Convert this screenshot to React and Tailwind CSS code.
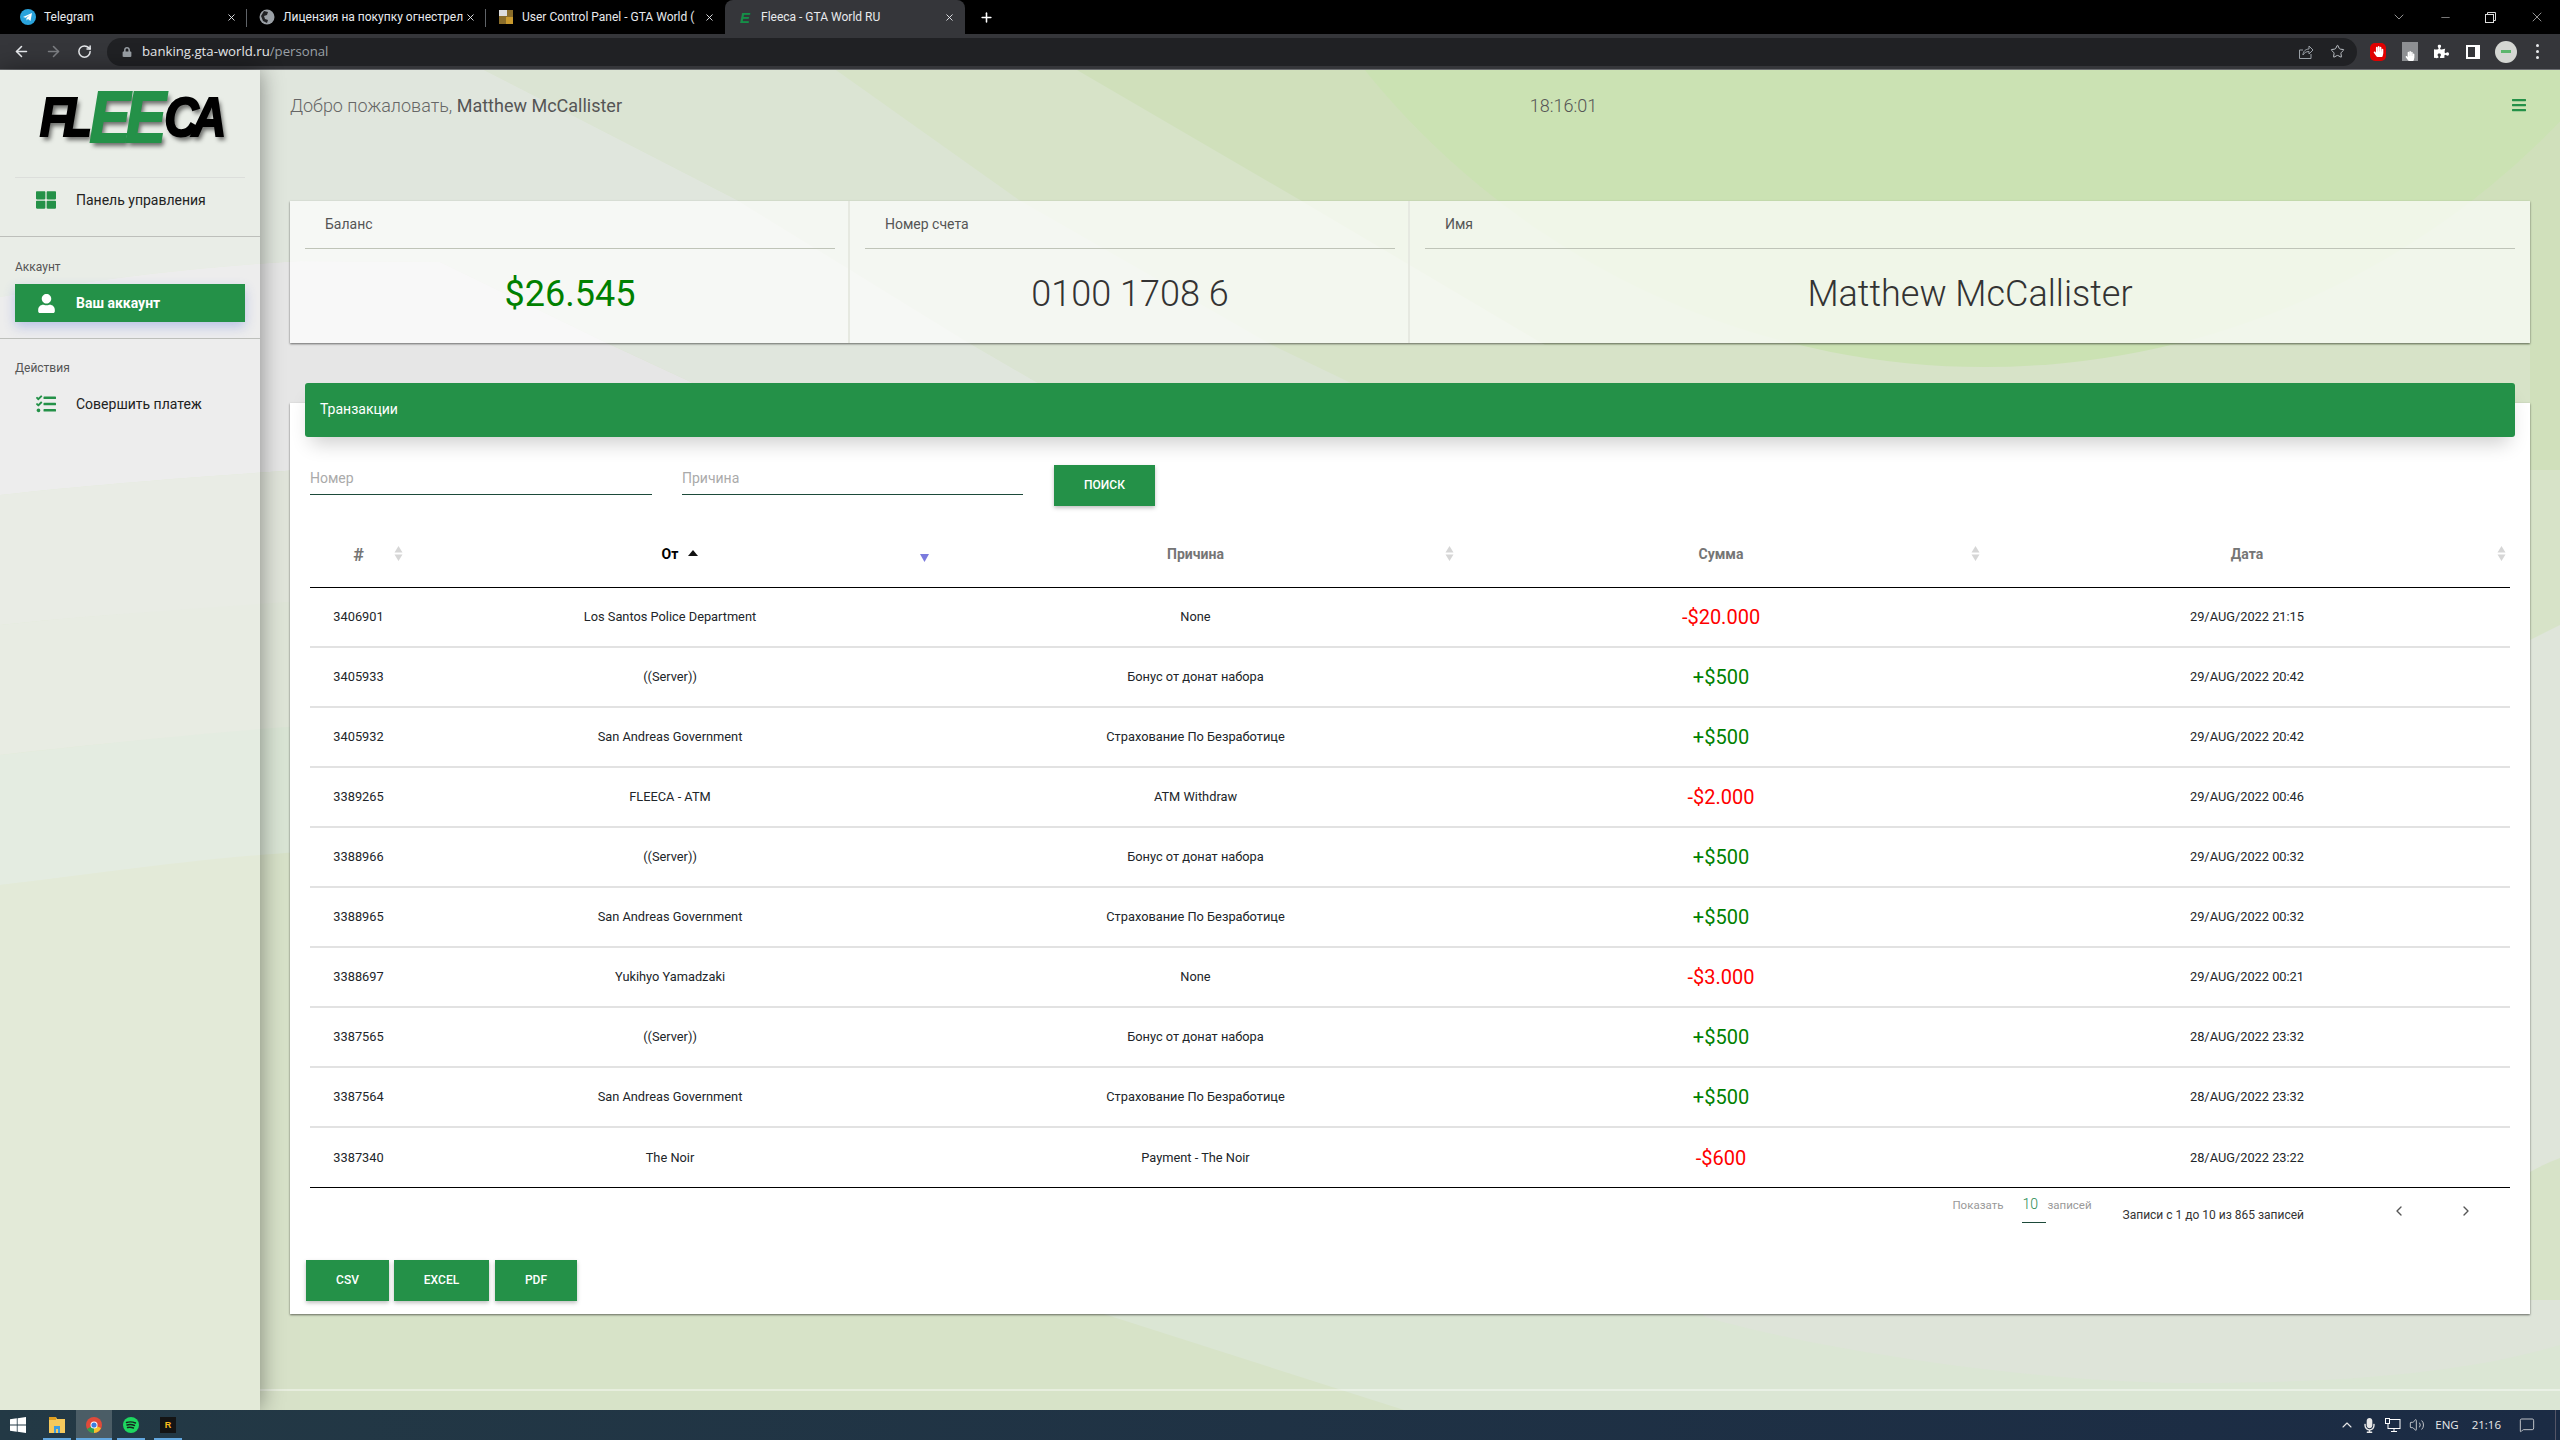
import React from 'react';
import { ArrowLeft, ArrowRight, RotateCw, Star, Plus, X, ChevronLeft, ChevronRight, ChevronDown, ChevronUp, Minus, Volume2, MessageSquare } from 'lucide-react';
import { FaThLarge, FaUser, FaTasks, FaLock, FaPuzzlePiece, FaBars, FaHandPaper, FaMicrophone } from 'react-icons/fa';

const rows = [
  ['3406901', 'Los Santos Police Department', 'None', '-$20.000', '29/AUG/2022 21:15'],
  ['3405933', '((Server))', 'Бонус от донат набора', '+$500', '29/AUG/2022 20:42'],
  ['3405932', 'San Andreas Government', 'Страхование По Безработице', '+$500', '29/AUG/2022 20:42'],
  ['3389265', 'FLEECA - ATM', 'ATM Withdraw', '-$2.000', '29/AUG/2022 00:46'],
  ['3388966', '((Server))', 'Бонус от донат набора', '+$500', '29/AUG/2022 00:32'],
  ['3388965', 'San Andreas Government', 'Страхование По Безработице', '+$500', '29/AUG/2022 00:32'],
  ['3388697', 'Yukihyo Yamadzaki', 'None', '-$3.000', '29/AUG/2022 00:21'],
  ['3387565', '((Server))', 'Бонус от донат набора', '+$500', '28/AUG/2022 23:32'],
  ['3387564', 'San Andreas Government', 'Страхование По Безработице', '+$500', '28/AUG/2022 23:32'],
  ['3387340', 'The Noir', 'Payment - The Noir', '-$600', '28/AUG/2022 23:22'],
];

function Sort() {
  return (
    <svg className="absolute right-[4px] top-[40px]" width="9" height="15" viewBox="0 0 9 15">
      <path d="M4.5 0 L8.5 6.5 H0.5 Z M4.5 15 L8.5 8.5 H0.5 Z" fill="#d6d6d6" />
    </svg>
  );
}

function Tab({ icon, title, active, width, sep, first }) {
  return (
    <div className={`relative h-[34px] flex items-center ${width} ${first ? 'ml-[8px]' : ''} ${active ? 'bg-[#35363a] rounded-t-[8px]' : ''}`}>
      <div className="w-[16px] h-[16px] ml-[12px] mr-[8px] flex items-center justify-center shrink-0">{icon}</div>
      <div className="flex-1 min-w-0 whitespace-nowrap text-[12px] text-[#e8eaed] [font-family:Roboto,sans-serif]">{title}</div>
      <X size={11} strokeWidth={2} className="text-[#e8eaed] mx-[10px] shrink-0" />
      {sep && <div className="absolute right-0 top-[9px] h-[18px] w-px bg-[#5f6368]" />}
    </div>
  );
}

function Card({ title, value, color, span }) {
  return (
    <div className={`h-[142px] pl-[15px] pr-[13px] bg-white/70 border-r-2 border-[#e6e9e1] last:border-r-0 last:pr-[15px] ${span ? 'col-span-2' : ''}`}>
      <div className="h-[48px] border-b border-[#bfc4b8] pl-[20px] pt-[14px] text-[14px] leading-[18px] text-[#555]">{title}</div>
      <div className={`h-[94px] pb-[4px] flex items-center justify-center text-[36px] ${color}`}>{value}</div>
    </div>
  );
}

function Btn({ children, w }) {
  return (
    <button className={`h-[41px] pb-[1px] ${w} bg-[#249148] text-white text-[12px] font-medium uppercase shadow-[0_2px_4px_rgba(0,0,0,0.25)]`}>{children}</button>
  );
}

function Background() {
  return (
    <svg className="absolute inset-0 w-full h-full" viewBox="0 70 2560 1340" preserveAspectRatio="none">
      <rect x="0" y="70" width="2560" height="1340" fill="#d7e3c8" />
      <path d="M1077 70 H2560 V470 H2530 V345 H1545 L1300 200 Z" fill="#d0e0bb" />
      <circle cx="1985" cy="-429" r="796" fill="#cbe2b3" />
      <path d="M484 70 H836 L1019 200 L1272 345 L1351 383 H1038 L969 343 L737 200 Z" fill="#dbe4d3" />
      <path d="M0 70 H484 L737 200 L969 343 L1038 383 H693 L607 343 L440 262 L300 261 C180 268 90 280 0 297 Z" fill="#e0e6dd" />
      <path d="M0 297 C90 280 180 268 300 261 L440 262 L607 343 L693 383 L700 520 H300 V470 C180 478 90 485 0 495 Z" fill="#e6e6e6" />
      <path d="M0 495 C90 485 180 478 300 470 V605 C180 610 90 615 0 625 Z" fill="#e0e4da" />
      <path d="M0 625 C90 615 180 610 300 601 V730 C180 735 90 745 0 755 Z" fill="#dee4d7" />
      <path d="M0 755 C90 745 180 735 300 726 V855 C180 860 90 875 0 885 Z" fill="#d9e4d4" />
      <path d="M0 885 C90 875 180 860 300 852 V1410 H0 Z" fill="#d7e1c8" />
      <path d="M2530 640 C2540 635 2550 630 2560 625 V1158 C2550 1162 2540 1166 2530 1172 Z" fill="#dfe5da" />
      <path d="M1060 1300 H2560 V1410 H1404 Z" fill="#dbe6d4" />
      <path d="M1690 1300 L1705 1317 C1800 1345 2020 1383 2196 1383 C2350 1383 2470 1372 2560 1345 V1300 Z" fill="#dee4d9" />
    </svg>
  );
}

function Logo() {
  const base = "[font-family:'Liberation_Sans',sans-serif] font-bold italic leading-none [text-shadow:3px_4px_5px_rgba(0,0,0,0.55)]";
  return (
    <div className="h-[107px] flex items-center justify-center pb-[14px] select-none">
      <div className={`flex items-center scale-x-[0.85] ${base}`}>
        <span className="text-[56px] text-black tracking-[-7px] [-webkit-text-stroke:2px_#000]">FL</span>
        <span className="text-[72px] text-[#249148] tracking-[-6px] ml-[4px] [-webkit-text-stroke:2px_#249148]">EE</span>
        <span className="text-[56px] text-black tracking-[-8px] ml-[4px] [-webkit-text-stroke:2px_#000]">CA</span>
      </div>
    </div>
  );
}

function Sidebar() {
  return (
    <aside className="relative z-10 w-[260px] shrink-0 bg-white/30 shadow-[0_0_22px_rgba(0,0,0,0.42)] text-[#222]">
      <Logo />
      <div className="mx-[15px] h-px bg-[#dcdedb]" />
      <div className="h-[58px] pb-[14px] flex items-center pl-[36px]">
        <FaThLarge size={20} className="text-[#249148]" />
        <span className="ml-[20px] text-[14px] font-normal text-[#222]">Панель управления</span>
      </div>
      <div className="h-px bg-[#bdbfbb]" />
      <div className="pl-[15px] pt-[22px] text-[12px] leading-[16px] text-[#555]">Аккаунт</div>
      <div className="mx-[15px] mt-[9px] h-[38px] flex items-center pl-[22px] bg-[#249148] text-white shadow-[0_5px_12px_rgba(70,100,220,0.3)]">
        <FaUser size={19} />
        <span className="ml-[20px] text-[14px] font-bold">Ваш аккаунт</span>
      </div>
      <div className="mt-[16px] h-px bg-[#bdbfbb]" />
      <div className="pl-[15px] pt-[21px] text-[12px] leading-[16px] text-[#555]">Действия</div>
      <div className="mt-[8px] h-[40px] flex items-center pl-[36px]">
        <FaTasks size={20} className="text-[#249148]" />
        <span className="ml-[20px] text-[14px] font-normal text-[#222]">Совершить платеж</span>
      </div>
    </aside>
  );
}

function Transactions() {
  return (
    <div className="mt-[60px] bg-white shadow-[0_1px_2px_rgba(0,0,0,0.55)] pb-[13px]">
      <div className="relative -top-[20px] mx-[15px] h-[54px] pb-[2px] rounded-[3px] bg-[#249148] flex items-center pl-[15px] text-[14px] text-white shadow-[0_12px_20px_-6px_rgba(0,0,0,0.2)]">Транзакции</div>
      <div className="-mt-[20px] px-[20px]">
        <div className="mt-[28px] flex h-[41px]">
          <div className="w-[342px] h-[30px] border-b border-[#1d4a3a] text-[14px] leading-[26px] text-[#aaa]">Номер</div>
          <div className="ml-[30px] w-[341px] h-[30px] border-b border-[#1d4a3a] text-[14px] leading-[26px] text-[#aaa]">Причина</div>
          <Btn w="ml-[31px] w-[101px]">Поиск</Btn>
        </div>
        <table className="w-full table-fixed border-collapse">
          <colgroup>
            <col className="w-[97px]" /><col className="w-[526px]" /><col className="w-[525px]" /><col className="w-[526px]" /><col />
          </colgroup>
          <thead>
            <tr className="h-[81px] border-b border-black">
              <th className="relative font-bold text-[18px] text-[#757575] text-center pt-[16px]">#<Sort /></th>
              <th className="relative font-bold text-[14px] text-black text-center pt-[16px]">
                <span className="relative">От
                  <svg className="absolute left-[26px] top-[4px]" width="10" height="6" viewBox="0 0 10 6"><path d="M5 0 L10 6 H0 Z" fill="#111" /></svg>
                </span>
                <svg className="absolute right-[4px] top-[47px]" width="9" height="9" viewBox="0 0 9 9"><path d="M4.5 9 L9 1 H0 Z" fill="#7b7bde" /></svg>
              </th>
              <th className="relative font-bold text-[14px] text-[#757575] text-center pt-[16px]">Причина<Sort /></th>
              <th className="relative font-bold text-[14px] text-[#757575] text-center pt-[16px]">Сумма<Sort /></th>
              <th className="relative font-bold text-[14px] text-[#757575] text-center pt-[16px]">Дата<Sort /></th>
            </tr>
          </thead>
          <tbody>
            {rows.map((r, i) => (
              <tr key={r[0]} className={i < 9 ? 'h-[60px] border-b-2 border-[#e2e2e2]' : 'h-[60px]'}>
                <td className="text-center text-[12.8px] text-[#212529]">{r[0]}</td>
                <td className="text-center text-[12.8px] text-[#212529]">{r[1]}</td>
                <td className="text-center text-[12.8px] text-[#212529]">{r[2]}</td>
                <td className={`text-center text-[20px] ${r[3][0] === '-' ? 'text-[#ff0000]' : 'text-[#008000]'}`}>{r[3]}</td>
                <td className="text-center text-[12.8px] text-[#212529]">{r[4]}</td>
              </tr>
            ))}
          </tbody>
        </table>
        <div className="border-t border-black h-[73px] flex justify-end items-start pr-[36px] text-[11.5px]">
          <span className="mt-[9px] text-[#999]">Показать</span>
          <span className="ml-[19px] mt-[6px] w-[24px] h-[29px] border-b border-[#1d4a3a] text-[14px] font-light text-[#1f8a50]">10</span>
          <span className="mt-[9px] ml-[1px] text-[#999]">записей</span>
          <span className="mt-[18px] ml-[31px] text-[12px] text-[#333]">Записи с 1 до 10 из 865 записей</span>
          <ChevronLeft size={16} className="mt-[15px] ml-[87px] text-[#555]" />
          <ChevronRight size={16} className="mt-[15px] ml-[51px] text-[#555]" />
        </div>
        <div className="-ml-[4px] flex">
          <Btn w="w-[83px]">CSV</Btn>
          <Btn w="ml-[5px] w-[95px]">Excel</Btn>
          <Btn w="ml-[6px] w-[82px]">PDF</Btn>
        </div>
      </div>
    </div>
  );
}

function Browser() {
  return (
    <>
      <div className="h-[34px] bg-black flex items-center [font-family:'Open_Sans',sans-serif]">
        <Tab first width="w-[239px]" sep title="Telegram" icon={
          <svg width="16" height="16" viewBox="0 0 16 16"><circle cx="8" cy="8" r="8" fill="#2aa3dc" /><path d="M3 8 L12 4 L10.5 12 L8 10 L6.5 11.5 L6.5 9 L10 6 L5.5 8.8 Z" fill="#fff" /></svg>
        } />
        <Tab width="w-[239px]" sep title="Лицензия на покупку огнестрел" icon={
          <svg width="16" height="16" viewBox="0 0 16 16"><circle cx="8" cy="8" r="7.5" fill="#9aa0a6" /><path d="M5 2 L9 3 L8 6 L5 7 L6 10 L9 11 L8 14 L4 12 L2 7 Z" fill="#202124" /></svg>
        } />
        <Tab width="w-[239px]" title="User Control Panel - GTA World (" icon={
          <svg width="16" height="16" viewBox="0 0 16 16"><rect x="1" y="1" width="14" height="14" fill="#8a6d2a" /><rect x="1" y="1" width="8" height="6" fill="#ddd" /><rect x="8" y="8" width="7" height="7" fill="#c99a2e" /></svg>
        } />
        <Tab width="w-[240px]" active title="Fleeca - GTA World RU" icon={
          <span className="[font-family:'Liberation_Sans',sans-serif] italic font-bold text-[15px] leading-none text-[#149048]">E</span>
        } />
        <Plus size={15} strokeWidth={2.5} className="text-white ml-[14px]" />
        <div className="ml-auto flex items-center text-[#ddd]">
          <ChevronDown size={16} strokeWidth={1} className="mr-[32px]" />
          <Minus size={13} strokeWidth={1} className="mr-[33px]" />
          <svg width="11" height="11" viewBox="0 0 11 11" className="mr-[33px]" fill="none" stroke="#ddd"><rect x="0.5" y="2.5" width="8" height="8" /><path d="M2.5 2.5 V0.5 H10.5 V8.5 H8.5" /></svg>
          <X size={16} strokeWidth={1} className="mr-[15px]" />
        </div>
      </div>
      <div className="h-[36px] bg-[#35363a] border-b border-[#6a6c70] flex items-center [font-family:'Open_Sans',sans-serif]">
        <ArrowLeft size={17} strokeWidth={2.2} className="ml-[13px] text-[#e8eaed]" />
        <ArrowRight size={17} strokeWidth={2.2} className="ml-[15px] text-[#7d7f83]" />
        <RotateCw size={15} strokeWidth={2.4} className="ml-[15px] text-[#e8eaed]" />
        <div className="ml-[15px] h-[28px] w-[2250px] rounded-full bg-[#202124] flex items-center pl-[15px]">
          <FaLock size={10} className="text-[#9aa0a6]" />
          <span className="ml-[10px] text-[13.2px] text-[#e8eaed]">banking.gta-world.ru<span className="text-[#9aa0a6]">/personal</span></span>
          <svg className="ml-auto mr-[8px] text-[#9aa0a6]" width="16" height="16" viewBox="0 0 16 16" fill="none" stroke="currentColor" strokeWidth="1"><path d="M13 10 V14.5 H1.5 V6 H5" /><path d="M5 11 C5 7 8 5 11 5 V2 L15 6 L11 10 V7.5 C8 7.5 6 9 5 11 Z" /></svg>
          <Star size={15} strokeWidth={1.6} className="ml-[8px] mr-[12px] text-[#bdc1c6]" />
        </div>
        <div className="ml-[13px] w-[16px] h-[18px] flex items-center justify-center bg-[#e00000] rounded-[5px]"><FaHandPaper size={11} className="text-white" /></div>
        <div className="ml-[16px] w-[16px] h-[19px] bg-[#8d8f92] flex items-end justify-center"><FaHandPaper size={10} className="text-white" /></div>
        <FaPuzzlePiece size={15} className="ml-[16px] text-white" />
        <div className="ml-[17px] w-[14px] h-[14px] border-2 border-white border-r-[5px]" />
        <div className="ml-[15px] w-[22px] h-[22px] rounded-full bg-[#d4d6d2] flex items-center justify-center"><div className="w-[10px] h-[3px] bg-[#5cb56d]" /></div>
        <div className="ml-[19px] flex flex-col gap-[3px]">
          <div className="w-[3px] h-[3px] rounded-full bg-[#e8eaed]" /><div className="w-[3px] h-[3px] rounded-full bg-[#e8eaed]" /><div className="w-[3px] h-[3px] rounded-full bg-[#e8eaed]" />
        </div>
      </div>
    </>
  );
}

function Taskbar() {
  const under = "absolute bottom-0 h-[2px] bg-[#63a8e0]";
  return (
    <div className="relative z-20 h-[30px] shrink-0 bg-[linear-gradient(90deg,#233945,#1b2b44)] flex items-center text-white [font-family:'Open_Sans',sans-serif]">
      <svg className="ml-[10px]" width="16" height="16" viewBox="0 0 16 16" fill="#fff"><path d="M0 2.3 L6.8 1.3 V7.6 H0 Z M7.6 1.2 L16 0 V7.6 H7.6 Z M0 8.4 H6.8 V14.7 L0 13.7 Z M7.6 8.4 H16 V16 L7.6 14.8 Z" /></svg>
      <div className="relative ml-[17px] w-[28px] h-[30px] flex items-center justify-center">
        <svg width="16" height="16" viewBox="0 0 16 16"><path d="M0 0 H7 L8 2 H16 V16 H0 Z" fill="#f6c95c" /><rect x="0" y="0" width="7" height="3" fill="#e0a020" /><rect x="5" y="9" width="6" height="7" fill="#3f9de0" /><rect x="7" y="12" width="2" height="4" fill="#f6c95c" /></svg>
        <div className={`${under} left-0 w-[28px]`} />
      </div>
      <div className="relative ml-[5px] w-[36px] h-[30px] bg-[#4b5d66] flex items-center justify-center">
        <svg width="16" height="16" viewBox="0 0 16 16"><circle cx="8" cy="8" r="8" fill="#e04a3a" /><path d="M8 8 L1 12 A8 8 0 0 0 8 16 Z" fill="#2f9e4f" /><path d="M8 8 L15 11 A8 8 0 0 1 8 16 Z" fill="#f2c230" /><circle cx="8" cy="8" r="3.5" fill="#fff" /><circle cx="8" cy="8" r="2.6" fill="#3b7de0" /></svg>
        <div className={`${under} left-0 w-[36px]`} />
      </div>
      <div className="relative ml-[5px] w-[28px] h-[30px] flex items-center justify-center">
        <svg width="16" height="16" viewBox="0 0 16 16"><circle cx="8" cy="8" r="8" fill="#1ed760" /><path d="M3.5 5.5 C6.5 4.5 9.5 4.7 12.5 6 M4 8 C6.5 7.2 9 7.4 11.5 8.5 M4.5 10.5 C6.5 10 8.5 10.1 10.5 11" stroke="#15241c" strokeWidth="1.4" fill="none" strokeLinecap="round" /></svg>
        <div className={`${under} left-0 w-[28px]`} />
      </div>
      <div className="relative ml-[9px] w-[28px] h-[30px] flex items-center justify-center">
        <div className="w-[16px] h-[16px] bg-[#141414] flex items-center justify-center [font-family:'Liberation_Sans',sans-serif] font-bold text-[9px] leading-none text-[#fcbc1c]">R</div>
        <div className={`${under} left-0 w-[28px]`} />
      </div>
      <div className="ml-auto flex items-center text-[11.5px] text-[#e8e8e8]">
        <ChevronUp size={16} strokeWidth={1.6} />
        <FaMicrophone size={15} className="ml-[7px]" />
        <svg className="ml-[8px]" width="16" height="16" viewBox="0 0 16 16" fill="none" stroke="#fff"><rect x="3" y="2.5" width="12" height="9" /><rect x="0.5" y="1.5" width="4" height="5" fill="#1b2b44" /><path d="M9 11.5 V14.5 M6 14.5 H12" /></svg>
        <Volume2 size={16} strokeWidth={1.2} className="ml-[8px]" />
        <span className="ml-[10px]">ENG</span>
        <span className="ml-[13px]">21:16</span>
        <MessageSquare size={16} strokeWidth={1.2} className="ml-[18px]" />
        <div className="ml-[20px] mr-[4px] w-px h-[30px] bg-[#556]" />
      </div>
    </div>
  );
}

export default function App() {
  return (
    <div className="w-full h-screen flex flex-col overflow-hidden [font-family:Roboto,sans-serif]">
      <Browser />
      <div className="relative flex-1 min-h-0 flex">
        <Background />
        <Sidebar />
        <main className="relative flex-1 flex flex-col">
          <div className="px-[30px]">
            <header className="h-[131px] pt-[25px] flex justify-between items-start text-[18px] leading-[22px]">
              <div className="font-light text-[#666]">Добро пожаловать, <span className="font-normal text-[#555]">Matthew McCallister</span></div>
              <div className="font-light text-[#555] mr-[6px]">18:16:01</div>
              <FaBars size={16} className="text-[#249148] mt-[2px] mr-[3px]" />
            </header>
            <div className="grid grid-cols-4 shadow-[0_1px_2px_rgba(0,0,0,0.55)]">
              <Card title="Баланс" value="$26.545" color="text-[#008000]" />
              <Card title="Номер счета" value="0100 1708 6" color="text-[#333] font-light" />
              <Card title="Имя" value="Matthew McCallister" color="text-[#333] font-light" span />
            </div>
            <Transactions />
          </div>
          <div className="mt-auto h-[21px] border-t-2 border-white/40" />
        </main>
      </div>
      <Taskbar />
    </div>
  );
}
